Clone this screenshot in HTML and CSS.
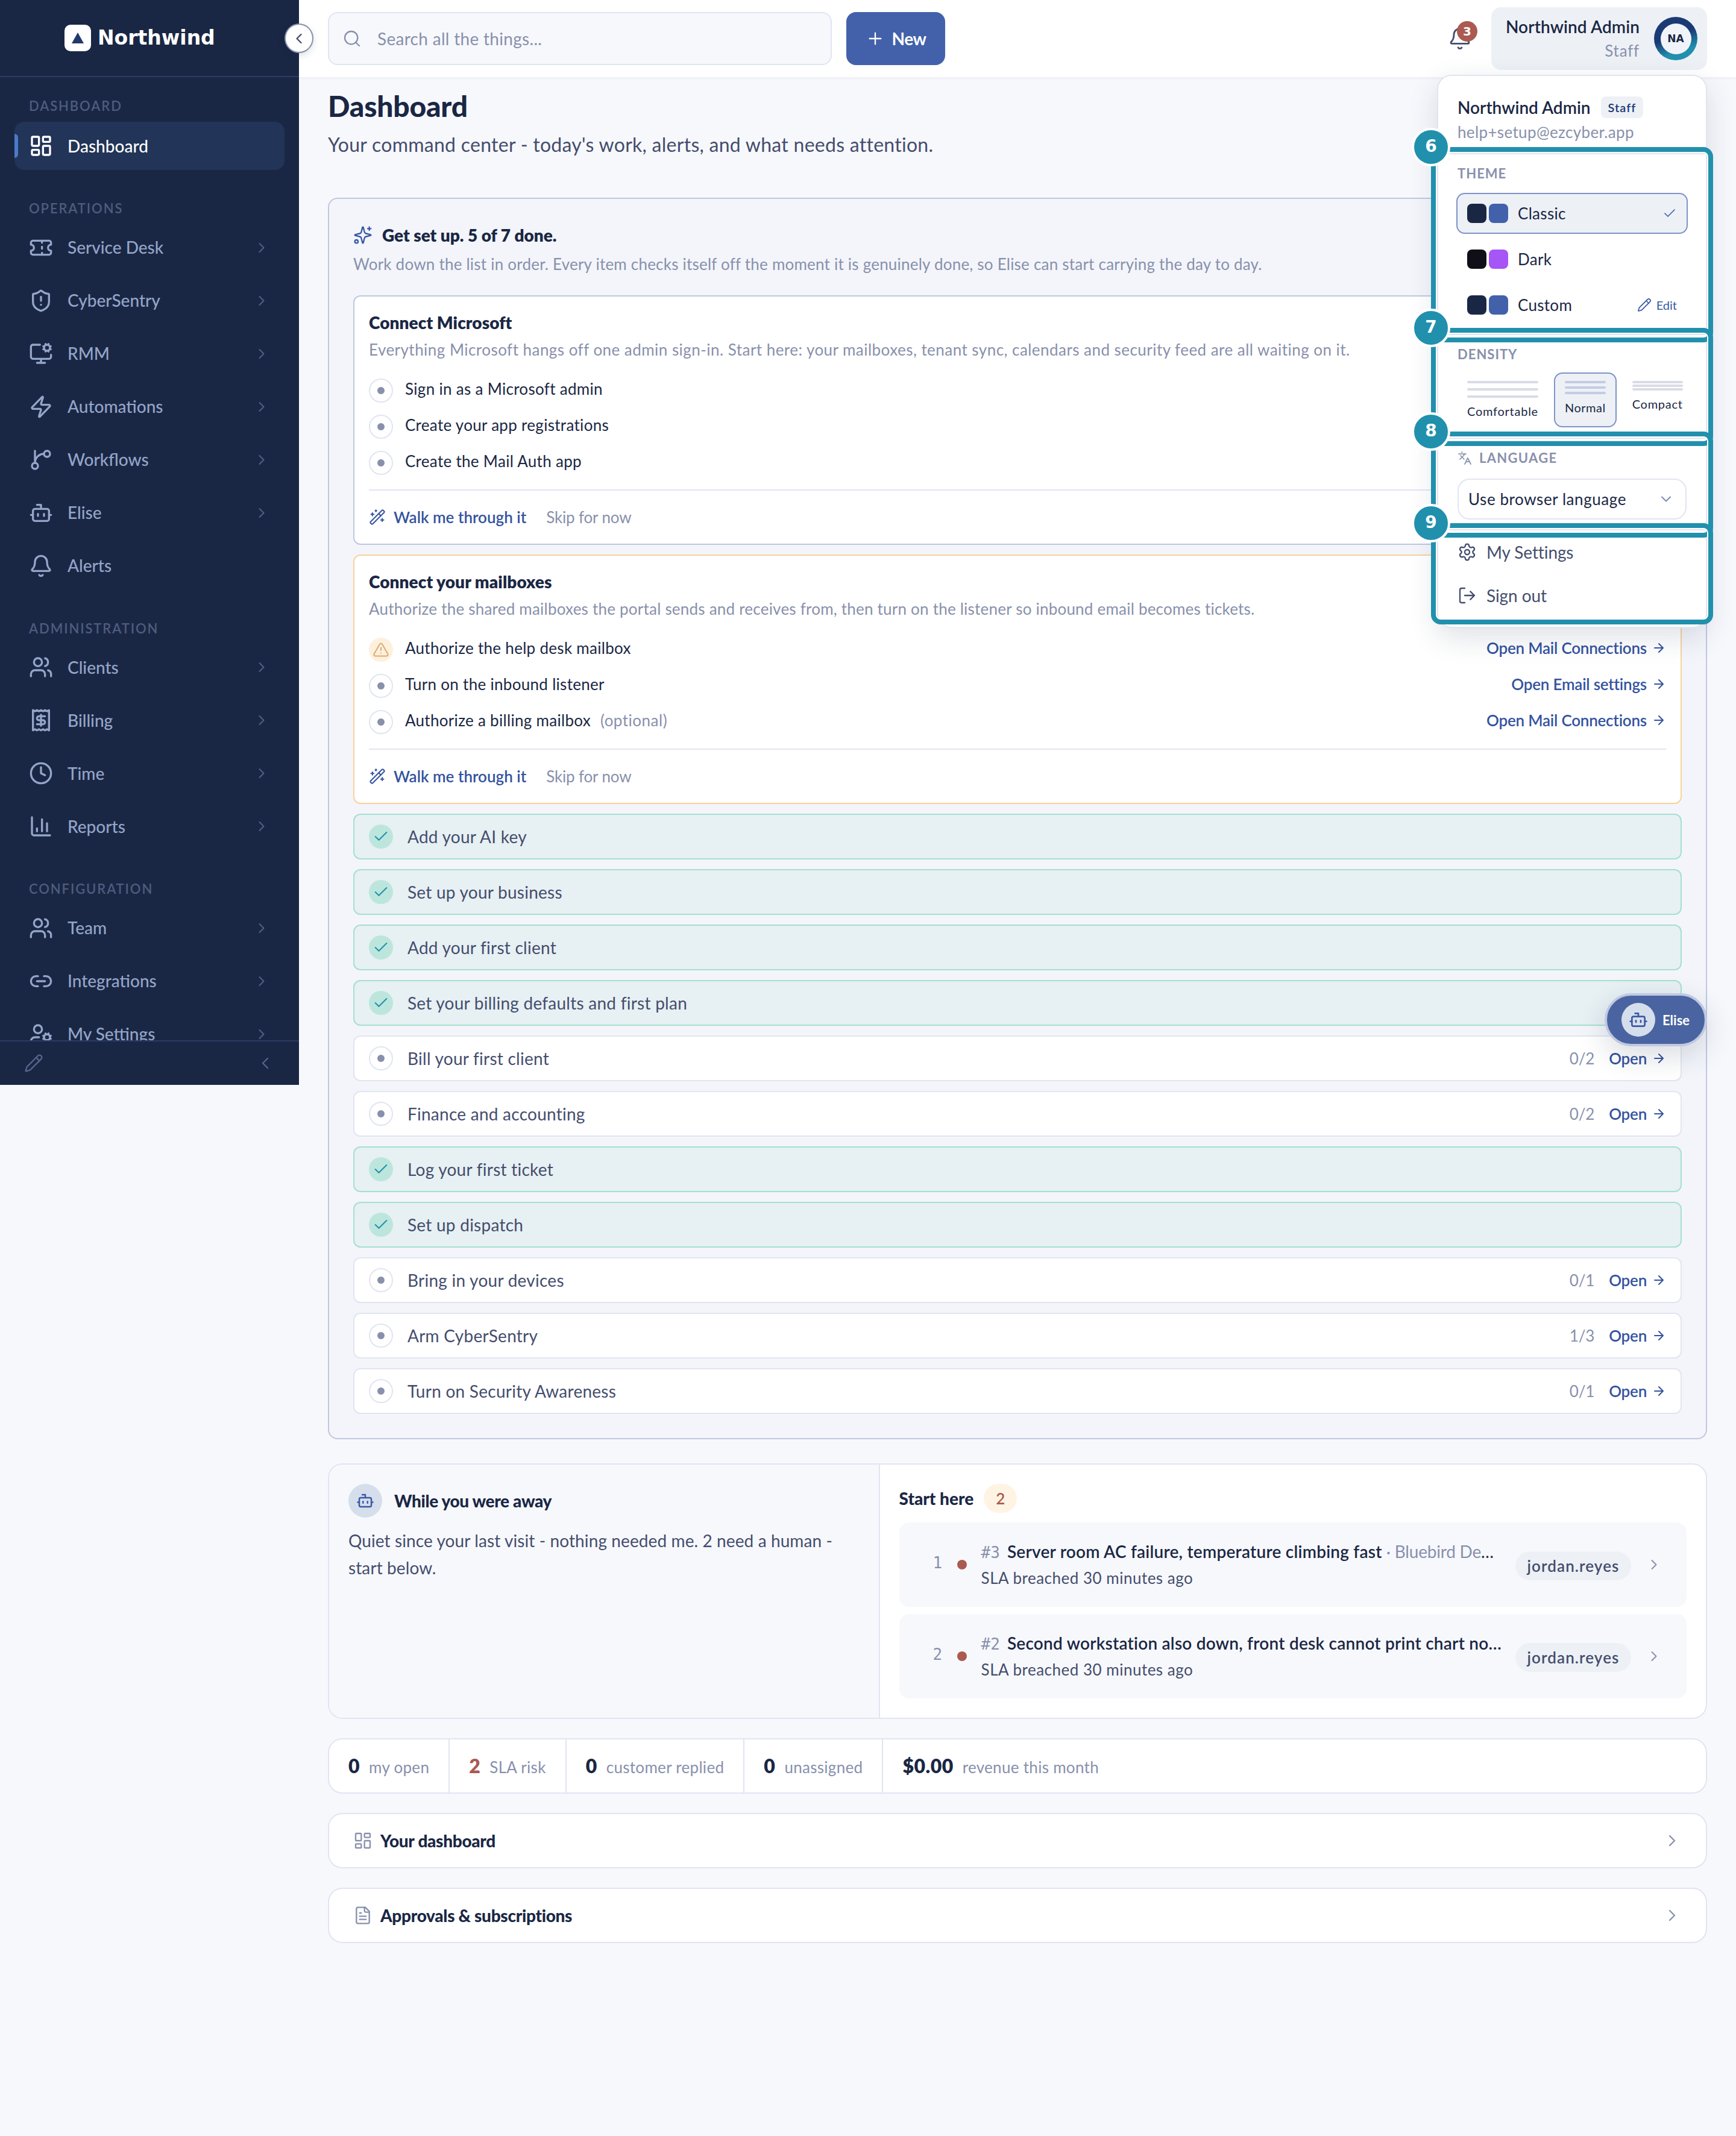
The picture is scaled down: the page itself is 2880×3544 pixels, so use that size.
FILE: index.html
```html
<!DOCTYPE html>
<html lang="en">
<head>
	<meta charset="utf-8">
	<title>Dashboard - Northwind</title>
	<link rel="stylesheet" href="styles.css">
</head>
<body>
	<svg class="sprite">
		<symbol id="i-dash" viewBox="0 0 24 24"><rect x="3" y="3" width="7" height="9" rx="1"/><rect x="14" y="3" width="7" height="5" rx="1"/><rect x="14" y="12" width="7" height="9" rx="1"/><rect x="3" y="16" width="7" height="5" rx="1"/></symbol>
		<symbol id="i-ticket" viewBox="0 0 24 24"><path d="M2 9a3 3 0 0 1 0 6v2a2 2 0 0 0 2 2h16a2 2 0 0 0 2-2v-2a3 3 0 0 1 0-6V7a2 2 0 0 0-2-2H4a2 2 0 0 0-2 2Z"/><path d="M13 5v2M13 17v2M13 11v2"/></symbol>
		<symbol id="i-shield" viewBox="0 0 24 24"><path d="M20 13c0 5-3.5 7.5-7.66 8.95a1 1 0 0 1-.67-.01C7.5 20.5 4 18 4 13V6a1 1 0 0 1 1-1c2 0 4.5-1.2 6.24-2.72a1.17 1.17 0 0 1 1.52 0C14.51 3.81 17 5 19 5a1 1 0 0 1 1 1z"/><path d="M12 8v4M12 16h.01"/></symbol>
		<symbol id="i-monitor" viewBox="0 0 24 24"><path d="M12 17v4M8 21h8M22 13v2a2 2 0 0 1-2 2H4a2 2 0 0 1-2-2V5a2 2 0 0 1 2-2h7"/><path d="m15.2 4.9-.9-.4M15.2 7.1l-.9.4M16.9 3.2l-.4-.9M16.9 8.8l-.4.9M19.5 2.3l-.4.9M19.5 9.7l-.4-.9M21.7 4.5l-.9.4M21.7 7.5l-.9-.4"/><circle cx="18" cy="6" r="3"/></symbol>
		<symbol id="i-zap" viewBox="0 0 24 24"><path d="M4 14a1 1 0 0 1-.78-1.63l9.9-10.2a.5.5 0 0 1 .86.46l-1.92 6.02A1 1 0 0 0 13 10h7a1 1 0 0 1 .78 1.63l-9.9 10.2a.5.5 0 0 1-.86-.46l1.92-6.02A1 1 0 0 0 11 14z"/></symbol>
		<symbol id="i-branch" viewBox="0 0 24 24"><path d="M15 6a9 9 0 0 0-9 9V3"/><circle cx="18" cy="6" r="3"/><circle cx="6" cy="18" r="3"/></symbol>
		<symbol id="i-bot" viewBox="0 0 24 24"><path d="M12 8V4H8"/><rect x="4" y="8" width="16" height="12" rx="2"/><path d="M2 14h2M20 14h2M15 13v2M9 13v2"/></symbol>
		<symbol id="i-bell" viewBox="0 0 24 24"><path d="M10.268 21a2 2 0 0 0 3.464 0"/><path d="M3.262 15.326A1 1 0 0 0 4 17h16a1 1 0 0 0 .74-1.673C19.41 13.956 18 12.499 18 8A6 6 0 0 0 6 8c0 4.499-1.411 5.956-2.738 7.326"/></symbol>
		<symbol id="i-users" viewBox="0 0 24 24"><path d="M16 21v-2a4 4 0 0 0-4-4H6a4 4 0 0 0-4 4v2M16 3.128a4 4 0 0 1 0 7.744M22 21v-2a4 4 0 0 0-3-3.87"/><circle cx="9" cy="7" r="4"/></symbol>
		<symbol id="i-receipt" viewBox="0 0 24 24"><path d="M4 2v20l2-1 2 1 2-1 2 1 2-1 2 1 2-1 2 1V2l-2 1-2-1-2 1-2-1-2 1-2-1-2 1Z"/><path d="M16 8h-6a2 2 0 1 0 0 4h4a2 2 0 1 1 0 4H8M12 17.5v-11"/></symbol>
		<symbol id="i-clock" viewBox="0 0 24 24"><circle cx="12" cy="12" r="10"/><path d="M12 6v6l4 2"/></symbol>
		<symbol id="i-chart" viewBox="0 0 24 24"><path d="M3 3v16a2 2 0 0 0 2 2h16M18 17V9M13 17V5M8 17v-3"/></symbol>
		<symbol id="i-link" viewBox="0 0 24 24"><path d="M9 17H7A5 5 0 0 1 7 7h2M15 7h2a5 5 0 1 1 0 10h-2M8 12h8"/></symbol>
		<symbol id="i-usercog" viewBox="0 0 24 24"><path d="M10 15H6a4 4 0 0 0-4 4v2M14.305 16.53l.923-.382M15.228 13.852l-.923-.383M16.852 12.228l-.383-.923M16.852 17.772l-.383.924M19.148 12.228l.383-.923M19.53 18.696l-.382-.924M20.772 13.852l.924-.383M20.772 16.148l.924.383"/><circle cx="18" cy="15" r="3"/><circle cx="9" cy="7" r="4"/></symbol>
		<symbol id="i-pencil" viewBox="0 0 24 24"><path d="M21.174 6.812a1 1 0 0 0-3.986-3.987L3.842 16.174a2 2 0 0 0-.5.83l-1.321 4.352a.5.5 0 0 0 .623.622l4.353-1.32a2 2 0 0 0 .83-.497z"/><path d="m15 5 4 4"/></symbol>
		<symbol id="i-search" viewBox="0 0 24 24"><circle cx="11" cy="11" r="8"/><path d="m21 21-4.3-4.3"/></symbol>
		<symbol id="i-plus" viewBox="0 0 24 24"><path d="M5 12h14M12 5v14"/></symbol>
		<symbol id="i-right" viewBox="0 0 24 24"><path d="m9 18 6-6-6-6"/></symbol>
		<symbol id="i-left" viewBox="0 0 24 24"><path d="m15 18-6-6 6-6"/></symbol>
		<symbol id="i-down" viewBox="0 0 24 24"><path d="m6 9 6 6 6-6"/></symbol>
		<symbol id="i-check" viewBox="0 0 24 24"><path d="M20 6 9 17l-5-5"/></symbol>
		<symbol id="i-arrow" viewBox="0 0 24 24"><path d="M5 12h14M12 5l7 7-7 7"/></symbol>
		<symbol id="i-sparkles" viewBox="0 0 24 24"><path d="M9.937 15.5A2 2 0 0 0 8.5 14.063l-6.135-1.582a.5.5 0 0 1 0-.962L8.5 9.936A2 2 0 0 0 9.937 8.5l1.582-6.135a.5.5 0 0 1 .963 0L14.063 8.5A2 2 0 0 0 15.5 9.937l6.135 1.581a.5.5 0 0 1 0 .964L15.5 14.063a2 2 0 0 0-1.437 1.437l-1.582 6.135a.5.5 0 0 1-.963 0z"/><path d="M20 2v4M22 4h-4"/><circle cx="4" cy="20" r="2"/></symbol>
		<symbol id="i-wand" viewBox="0 0 24 24"><path d="m21.64 3.64-1.28-1.28a1.21 1.21 0 0 0-1.72 0L2.36 18.64a1.21 1.21 0 0 0 0 1.72l1.28 1.28a1.2 1.2 0 0 0 1.72 0L21.64 5.36a1.2 1.2 0 0 0 0-1.72"/><path d="m14 7 3 3M5 6v4M19 14v4M10 2v2M7 8H3M21 16h-4M11 3H9"/></symbol>
		<symbol id="i-warn" viewBox="0 0 24 24"><path d="m21.73 18-8-14a2 2 0 0 0-3.48 0l-8 14A2 2 0 0 0 4 21h16a2 2 0 0 0 1.73-3M12 9v4M12 17h.01"/></symbol>
		<symbol id="i-lang" viewBox="0 0 24 24"><path d="m5 8 6 6M4 14l6-6 2-3M2 5h12M7 2h1M22 22l-5-10-5 10M14 18h6"/></symbol>
		<symbol id="i-gear" viewBox="0 0 24 24"><path d="M9.671 4.136a2.34 2.34 0 0 1 4.659 0 2.34 2.34 0 0 0 3.319 1.915 2.34 2.34 0 0 1 2.33 4.033 2.34 2.34 0 0 0 0 3.831 2.34 2.34 0 0 1-2.33 4.033 2.34 2.34 0 0 0-3.319 1.915 2.34 2.34 0 0 1-4.659 0 2.34 2.34 0 0 0-3.32-1.915 2.34 2.34 0 0 1-2.33-4.033 2.34 2.34 0 0 0 0-3.831A2.34 2.34 0 0 1 6.35 6.051a2.34 2.34 0 0 0 3.319-1.915"/><circle cx="12" cy="12" r="3"/></symbol>
		<symbol id="i-logout" viewBox="0 0 24 24"><path d="m16 17 5-5-5-5M21 12H9M9 21H5a2 2 0 0 1-2-2V5a2 2 0 0 1 2-2h4"/></symbol>
		<symbol id="i-file" viewBox="0 0 24 24"><path d="M15 2H6a2 2 0 0 0-2 2v16a2 2 0 0 0 2 2h12a2 2 0 0 0 2-2V7Z"/><path d="M14 2v4a2 2 0 0 0 2 2h4M10 9H8M16 13H8M16 17H8"/></symbol>
	</svg>

	<aside class="sidebar">
		<div class="brand">
			<svg class="logo" viewBox="0 0 44 44"><rect width="44" height="44" rx="10" fill="#fff"/><path d="M22 13 32 31H12Z" fill="#22396b"/></svg>
			<span class="brand-name">Northwind</span>
		</div>
		<nav class="nav">
			<h6>Dashboard</h6>
			<a class="active"><svg><use href="#i-dash"/></svg><span>Dashboard</span></a>
			<h6>Operations</h6>
			<a><svg><use href="#i-ticket"/></svg><span>Service Desk</span><svg class="chev"><use href="#i-right"/></svg></a>
			<a><svg><use href="#i-shield"/></svg><span>CyberSentry</span><svg class="chev"><use href="#i-right"/></svg></a>
			<a><svg><use href="#i-monitor"/></svg><span>RMM</span><svg class="chev"><use href="#i-right"/></svg></a>
			<a><svg><use href="#i-zap"/></svg><span>Automations</span><svg class="chev"><use href="#i-right"/></svg></a>
			<a><svg><use href="#i-branch"/></svg><span>Workflows</span><svg class="chev"><use href="#i-right"/></svg></a>
			<a><svg><use href="#i-bot"/></svg><span>Elise</span><svg class="chev"><use href="#i-right"/></svg></a>
			<a><svg><use href="#i-bell"/></svg><span>Alerts</span></a>
			<h6>Administration</h6>
			<a><svg><use href="#i-users"/></svg><span>Clients</span><svg class="chev"><use href="#i-right"/></svg></a>
			<a><svg><use href="#i-receipt"/></svg><span>Billing</span><svg class="chev"><use href="#i-right"/></svg></a>
			<a><svg><use href="#i-clock"/></svg><span>Time</span><svg class="chev"><use href="#i-right"/></svg></a>
			<a><svg><use href="#i-chart"/></svg><span>Reports</span><svg class="chev"><use href="#i-right"/></svg></a>
			<h6>Configuration</h6>
			<a><svg><use href="#i-users"/></svg><span>Team</span><svg class="chev"><use href="#i-right"/></svg></a>
			<a><svg><use href="#i-link"/></svg><span>Integrations</span><svg class="chev"><use href="#i-right"/></svg></a>
			<a><svg><use href="#i-usercog"/></svg><span>My Settings</span><svg class="chev"><use href="#i-right"/></svg></a>
		</nav>
		<div class="side-foot">
			<svg><use href="#i-pencil"/></svg>
			<svg><use href="#i-left"/></svg>
		</div>
		<button class="collapse"><svg><use href="#i-left"/></svg></button>
	</aside>

	<div class="page">
		<header class="topbar">
			<div class="search"><svg><use href="#i-search"/></svg><span>Search all the things...</span></div>
			<button class="btn-new"><svg><use href="#i-plus"/></svg><span>New</span></button>
			<div class="bell"><svg><use href="#i-bell"/></svg><b>3</b></div>
			<div class="user">
				<div class="user-text"><span class="user-name">Northwind Admin</span><small>Staff</small></div>
				<div class="avatar"><i>NA</i></div>
			</div>
		</header>

		<main class="content">
			<h1>Dashboard</h1>
			<p class="lead">Your command center - today's work, alerts, and what needs attention.</p>

			<section class="setup">
				<h2><svg><use href="#i-sparkles"/></svg><span>Get set up. 5 of 7 done.</span></h2>
				<p class="note">Work down the list in order. Every item checks itself off the moment it is genuinely done, so Elise can start carrying the day to day.</p>

				<div class="task">
					<h3>Connect Microsoft</h3>
					<p class="note wide">Everything Microsoft hangs off one admin sign-in. Start here: your mailboxes, tenant sync, calendars and security feed are all waiting on it.</p>
					<ul class="steps">
						<li><i class="dot"></i><span>Sign in as a Microsoft admin</span></li>
						<li><i class="dot"></i><span>Create your app registrations</span></li>
						<li><i class="dot"></i><span>Create the Mail Auth app</span></li>
					</ul>
					<div class="task-foot"><a class="walk"><svg><use href="#i-wand"/></svg><span>Walk me through it</span></a><span class="skip">Skip for now</span></div>
				</div>

				<div class="task warn">
					<h3>Connect your mailboxes</h3>
					<p class="note">Authorize the shared mailboxes the portal sends and receives from, then turn on the listener so inbound email becomes tickets.</p>
					<ul class="steps">
						<li><i class="dot alert"><svg><use href="#i-warn"/></svg></i><span>Authorize the help desk mailbox</span><a class="open"><span>Open Mail Connections</span><svg><use href="#i-arrow"/></svg></a></li>
						<li><i class="dot"></i><span>Turn on the inbound listener</span><a class="open"><span>Open Email settings</span><svg><use href="#i-arrow"/></svg></a></li>
						<li><i class="dot"></i><span>Authorize a billing mailbox</span><em>(optional)</em><a class="open"><span>Open Mail Connections</span><svg><use href="#i-arrow"/></svg></a></li>
					</ul>
					<div class="task-foot"><a class="walk"><svg><use href="#i-wand"/></svg><span>Walk me through it</span></a><span class="skip">Skip for now</span></div>
				</div>

				<div class="row done"><i class="dot"><svg><use href="#i-check"/></svg></i><span>Add your AI key</span></div>
				<div class="row done"><i class="dot"><svg><use href="#i-check"/></svg></i><span>Set up your business</span></div>
				<div class="row done"><i class="dot"><svg><use href="#i-check"/></svg></i><span>Add your first client</span></div>
				<div class="row done"><i class="dot"><svg><use href="#i-check"/></svg></i><span>Set your billing defaults and first plan</span></div>
				<div class="row"><i class="dot"></i><span>Bill your first client</span><em>0/2</em><a class="open"><span>Open</span><svg><use href="#i-arrow"/></svg></a></div>
				<div class="row"><i class="dot"></i><span>Finance and accounting</span><em>0/2</em><a class="open"><span>Open</span><svg><use href="#i-arrow"/></svg></a></div>
				<div class="row done"><i class="dot"><svg><use href="#i-check"/></svg></i><span>Log your first ticket</span></div>
				<div class="row done"><i class="dot"><svg><use href="#i-check"/></svg></i><span>Set up dispatch</span></div>
				<div class="row"><i class="dot"></i><span>Bring in your devices</span><em>0/1</em><a class="open"><span>Open</span><svg><use href="#i-arrow"/></svg></a></div>
				<div class="row"><i class="dot"></i><span>Arm CyberSentry</span><em>1/3</em><a class="open"><span>Open</span><svg><use href="#i-arrow"/></svg></a></div>
				<div class="row"><i class="dot"></i><span>Turn on Security Awareness</span><em>0/1</em><a class="open"><span>Open</span><svg><use href="#i-arrow"/></svg></a></div>
			</section>

			<section class="brief">
				<div class="away">
					<h4><i class="bot"><svg><use href="#i-bot"/></svg></i><span>While you were away</span></h4>
					<p>Quiet since your last visit - nothing needed me. 2 need a human -<br>start below.</p>
				</div>
				<div class="start">
					<h4><span>Start here</span><b>2</b></h4>
					<div class="ticket">
						<span class="num">1</span><i class="red"></i>
						<div class="ticket-text">
							<p class="t"><span class="id">#3</span><strong>Server room AC failure, temperature climbing fast</strong><span class="org"> · Bluebird De</span>…</p>
							<p class="s">SLA breached 30 minutes ago</p>
						</div>
						<span class="pill">jordan.reyes</span><svg><use href="#i-right"/></svg>
					</div>
					<div class="ticket">
						<span class="num">2</span><i class="red"></i>
						<div class="ticket-text">
							<p class="t"><span class="id">#2</span><strong>Second workstation also down, front desk cannot print chart no…</strong></p>
							<p class="s">SLA breached 30 minutes ago</p>
						</div>
						<span class="pill">jordan.reyes</span><svg><use href="#i-right"/></svg>
					</div>
				</div>
			</section>

			<section class="stats">
				<div><b>0</b><span>my open</span></div>
				<div><b class="bad">2</b><span>SLA risk</span></div>
				<div><b>0</b><span>customer replied</span></div>
				<div><b>0</b><span>unassigned</span></div>
				<div><b>$0.00</b><span>revenue this month</span></div>
			</section>

			<section class="panel"><svg><use href="#i-dash"/></svg><span>Your dashboard</span><svg class="chev"><use href="#i-right"/></svg></section>
			<section class="panel"><svg><use href="#i-file"/></svg><span>Approvals &amp; subscriptions</span><svg class="chev"><use href="#i-right"/></svg></section>
		</main>
	</div>

	<button class="elise"><i class="bot"><svg><use href="#i-bot"/></svg></i><span>Elise</span></button>

	<div class="menu">
		<div class="menu-head">
			<p class="who"><span>Northwind Admin</span><b>Staff</b></p>
			<p class="mail">help+setup@ezcyber.app</p>
		</div>
		<div class="menu-sec theme">
			<h5>Theme</h5>
			<div class="opt on"><i class="sw navy"></i><i class="sw blue"></i><span>Classic</span><svg><use href="#i-check"/></svg></div>
			<div class="opt"><i class="sw black"></i><i class="sw purple"></i><span>Dark</span></div>
			<div class="opt"><i class="sw navy"></i><i class="sw blue"></i><span>Custom</span><a class="edit"><svg><use href="#i-pencil"/></svg><span>Edit</span></a></div>
		</div>
		<div class="menu-sec density">
			<h5>Density</h5>
			<div class="dens">
				<div class="comfy"><i></i><i></i><i></i><span>Comfortable</span></div>
				<div class="normal on"><i></i><i></i><i></i><span>Normal</span></div>
				<div class="compact"><i></i><i></i><i></i><span>Compact</span></div>
			</div>
		</div>
		<div class="menu-sec lang">
			<h5><svg><use href="#i-lang"/></svg><span>Language</span></h5>
			<div class="select"><span>Use browser language</span><svg><use href="#i-down"/></svg></div>
		</div>
		<div class="menu-sec links">
			<a><svg><use href="#i-gear"/></svg><span>My Settings</span></a>
			<a><svg><use href="#i-logout"/></svg><span>Sign out</span></a>
		</div>
	</div>

	<!-- numbered callouts over the menu -->
	<div class="mark m6"><b>6</b></div>
	<div class="mark m7"><b>7</b></div>
	<div class="mark m8"><b>8</b></div>
	<div class="mark m9"><b>9</b></div>
</body>
</html>
```
FILE: styles.css
```css
*{margin:0;padding:0;box-sizing:border-box;}
body{
	display: flex;
	position: relative;
	width: 2880px;
	height: 3544px;
	background-color: #f7f8fc;
	font-family: Lato, "Noto Sans", sans-serif;
	font-size: 28px;
	color: #1a2744;
}
svg{
	flex: none;
	fill: none;
	stroke: currentColor;
	stroke-width: 1.75;
	stroke-linecap: round;
	stroke-linejoin: round;
}
i,em{font-style: normal;}
button{border: 0;font: inherit;}
.sprite{position: absolute;width: 0;height: 0;}

/* sidebar */
.sidebar{
	position: relative;
	display: flex;
	flex-direction: column;
	flex: none;
	width: 496px;
	height: 1800px;
	background-color: #1a2744;
	color: #94a5c9;
}
.brand{
	display: flex;
	align-items: center;
	gap: 11px;
	height: 128px;
	padding-left: 107px;
	border-bottom: 2px solid #2b3c62;
}
.logo{width: 44px;height: 44px;stroke: none;}
.brand-name{
	font: bold 33px/44px "DejaVu Sans", sans-serif;
	color: #fff;
}
.nav{
	flex: 1;
	overflow: hidden;
	padding: 0 24px;
}
.nav h6{
	height: 88.5px;
	padding: 50px 24px 0;
	margin-top: -8px;
	font-size: 22px;
	line-height: 28px;
	font-weight: 600;
	letter-spacing: 1.9px;
	text-transform: uppercase;
	color: #4f5c7e;
}
.nav h6:first-child{
	height: 74px;
	padding-top: 34px;
	margin-top: 0;
}
.nav a{
	position: relative;
	display: flex;
	align-items: center;
	height: 80px;
	margin-bottom: 8px;
	padding: 0 24px;
	border-radius: 16px;
	font-weight: 500;
	line-height: 34px;
}
.nav a span{padding-bottom: 1px;}
.nav a svg{width: 40px;height: 40px;margin-right: 24px;stroke-width: 2;}
.nav a .chev{
	width: 28px;
	height: 28px;
	margin: 0 0 0 auto;
	stroke-width: 1.75;
	color: #4f6087;
}
.nav .active{background-color: #223457;color: #fff;}
.nav .active:before{
	content: "";
	position: absolute;
	left: 0;
	top: 20px;
	width: 6px;
	height: 40px;
	border-radius: 0 6px 6px 0;
	background-color: #4a7bc8;
}
.side-foot{
	display: flex;
	justify-content: space-between;
	align-items: center;
	height: 74px;
	padding: 0 40px;
	border-top: 2px solid #2b3c62;
	color: #56658b;
}
.side-foot svg{width: 32px;height: 32px;}
.collapse{
	position: absolute;
	left: 472px;
	top: 39px;
	display: flex;
	align-items: center;
	justify-content: center;
	width: 48px;
	height: 49px;
	border: 2px solid #8890ac;
	border-radius: 50%;
	background-color: #fff;
	color: #444d6d;
	box-shadow: 0 4px 12px rgba(26,39,68,.15);
}
.collapse svg{width: 28px;height: 28px;stroke-width: 2;}

/* topbar */
.page{flex: 1;}
.topbar{
	display: flex;
	align-items: center;
	height: 128px;
	padding: 0 48px;
	background-color: #fff;
	box-shadow: 0 2px 4px rgba(26,39,68,.05);
}
.search{
	display: flex;
	align-items: center;
	gap: 26px;
	width: 836px;
	height: 88px;
	padding: 0 22px;
	border: 2px solid #e1e5f1;
	border-radius: 16px;
	background-color: #f7f8fc;
	color: #8890ac;
	letter-spacing: .3px;
}
.search svg{width: 32px;height: 32px;}
.btn-new{
	display: flex;
	align-items: center;
	justify-content: center;
	gap: 12px;
	width: 164px;
	height: 88px;
	margin-left: 24px;
	border-radius: 16px;
	background-color: #4361ab;
	color: #fff;
	font-weight: 700;
	letter-spacing: -.5px;
}
.btn-new svg{width: 32px;height: 32px;}
.bell{
	position: relative;
	height: 40px;
	margin-left: auto;
	margin-right: 32px;
	color: #444d6d;
}
.bell svg{width: 40px;height: 40px;}
.bell b{
	position: absolute;
	left: 15px;
	top: -9px;
	width: 34px;
	height: 34px;
	border-radius: 50%;
	background-color: #aa5a50;
	color: #fff;
	font: bold 20px/34px "DejaVu Sans", sans-serif;
	text-align: center;
}
.user{
	display: flex;
	justify-content: flex-end;
	align-items: center;
	gap: 24px;
	width: 358px;
	height: 104px;
	padding-right: 16px;
	border-radius: 16px;
	background-color: #edf1f6;
}
.user-text{display: flex;flex-direction: column;text-align: right;line-height: 40px;white-space: nowrap;}
.user-name{font-weight: 600;letter-spacing: .1px;}
.user small{font-size: 26px;letter-spacing: .8px;color: #8890ac;}
.avatar{
	display: flex;
	align-items: center;
	justify-content: center;
	width: 72px;
	height: 72px;
	border-radius: 50%;
	background: linear-gradient(160deg, #1b3a75 45%, #2190ad 75%);
}
.avatar i{
	width: 51px;
	height: 51px;
	border-radius: 50%;
	background-color: #f0f4fa;
	font: bold 17px/51px "DejaVu Sans", sans-serif;
	text-align: center;
}

/* content */
.content{padding: 18px 48px 0;}
h1{
	font-size: 48px;
	line-height: 60px;
	font-weight: 900;
	letter-spacing: -.2px;
}
.lead{
	margin: 12px 0 66px;
	font-size: 32px;
	line-height: 44px;
	letter-spacing: .27px;
	color: #444d6d;
}
.setup{
	padding: 40px;
	border: 2px solid #bfc8e0;
	border-radius: 16px;
	background-color: #f3f5fa;
}
.setup h2{
	display: flex;
	align-items: center;
	gap: 16px;
	font-size: 28px;
	line-height: 40px;
	font-weight: 800;
}
.setup h2 svg{width: 32px;height: 32px;color: #3b59a5;}
.note{
	font-size: 26px;
	line-height: 36px;
	letter-spacing: .22px;
	color: #8890ac;
	white-space: nowrap;
}
.note.wide{letter-spacing: .46px;}
.setup > .note{margin: 10px 0 34px;}
.task{
	height: 414px;
	padding: 24px;
	margin-bottom: 16px;
	border: 2px solid #bfc8e0;
	border-radius: 12px;
	background-color: #fff;
}
.task.warn{border-color: #f8d29a;}
.task h3{font-size: 28px;line-height: 38px;font-weight: 800;letter-spacing: .08px;}
.task .note{margin: 8px 0 30px;}
.steps{
	display: flex;
	flex-direction: column;
	gap: 20px;
	list-style: none;
	font-size: 26px;
	line-height: 34px;
	letter-spacing: .3px;
}
.steps li{display: flex;height: 40px;}
.steps .dot{margin-right: 20px;}
.steps em{margin-left: 16px;letter-spacing: .5px;color: #8890ac;}
.dot{
	display: flex;
	align-items: center;
	justify-content: center;
	flex: none;
	width: 40px;
	height: 40px;
	border: 2px solid #e1e5f1;
	border-radius: 50%;
	background-color: #fff;
}
.dot:before{
	content: "";
	width: 12px;
	height: 12px;
	border-radius: 50%;
	background-color: #8890ac;
}
.dot.alert,.done .dot{border: 0;background-color: #fdf0dd;color: #dfaa70;}
.dot.alert:before,.done .dot:before{display: none;}
.dot svg{width: 28px;height: 28px;}
.open{
	display: flex;
	align-items: center;
	gap: 8px;
	margin-left: auto;
	font-size: 26px;
	font-weight: 600;
	letter-spacing: -.22px;
	color: #34539f;
}
.steps .open{height: 34px;}
.open svg{width: 24px;height: 24px;stroke-width: 2;}
.task-foot{
	display: flex;
	align-items: center;
	margin-top: 24px;
	padding-top: 26px;
	border-top: 2px solid #e1e5f1;
	font-size: 26px;
	line-height: 36px;
}
.walk{
	display: flex;
	align-items: center;
	gap: 13px;
	font-weight: 600;
	color: #34539f;
}
.walk svg{width: 28px;height: 28px;}
.skip{margin-left: 33px;letter-spacing: -.15px;color: #8890ac;}
.row{
	display: flex;
	align-items: center;
	height: 76px;
	margin-bottom: 16px;
	padding: 0 24px;
	border: 2px solid #e1e5f1;
	border-radius: 12px;
	background-color: #fff;
	color: #444d6d;
	letter-spacing: .25px;
}
.row:last-child{margin-bottom: 0;}
.row .dot{margin-right: 24px;}
.row em{margin-left: auto;margin-right: 24px;font-size: 26px;letter-spacing: -.2px;color: #8890ac;}
.row .open{margin-left: 0;}
.row.done{border-color: #a5e0cf;background-color: #e7f0f3;}
.done .dot{background-color: #bce6dc;color: #2190ad;}

/* briefing */
.brief{
	display: grid;
	grid-template-columns: 2fr 3fr;
	height: 424px;
	margin: 40px 0 32px;
	border: 2px solid #e1e5f1;
	border-radius: 24px;
	background-color: #fff;
	overflow: hidden;
}
.brief h4{display: flex;align-items: center;font-size: 28px;font-weight: 900;}
.away{
	padding: 32px;
	border-right: 2px solid #e1e5f1;
	background-color: #f7f8fc;
}
.away h4{letter-spacing: -.36px;}
.bot{
	display: flex;
	align-items: center;
	justify-content: center;
	width: 56px;
	height: 56px;
	border-radius: 50%;
	background-color: #d5deeb;
	color: #3b59a5;
}
.bot svg{width: 32px;height: 32px;stroke-width: 2;}
.away .bot{margin-right: 20px;}
.away .bot svg{width: 30px;height: 30px;}
.away p{
	margin-top: 16px;
	font-size: 28px;
	line-height: 45px;
	letter-spacing: .1px;
	color: #444d6d;
	white-space: nowrap;
}
.start{min-width: 0;padding: 32px;}
.start h4{margin-bottom: 16px;}
.start h4 b{
	width: 55px;
	height: 48px;
	margin-left: 17px;
	border-radius: 24px;
	background-color: #fff4e4;
	color: #aa5a50;
	font-size: 26px;
	line-height: 48px;
	font-weight: 600;
	text-align: center;
}
.ticket{
	display: flex;
	align-items: center;
	height: 140px;
	margin-bottom: 12px;
	padding: 0 40px 0 56px;
	border-radius: 16px;
	background-color: #f7f8fc;
}
.ticket .num,.ticket .id{
	font-family: "DejaVu Sans Mono", monospace;
	font-size: 26px;
	color: #8890ac;
}
.ticket .num{width: 16px;margin-top: -6px;}
.red{width: 16px;height: 16px;margin: 0 24px;border-radius: 50%;background-color: #aa5a50;flex: none;}
.ticket-text{flex: 1;min-width: 0;}
.ticket .t{height: 44px;line-height: 44px;white-space: nowrap;}
.ticket .t strong{font-weight: 600;margin-left: 12px;letter-spacing: .23px;}
.ticket .org{letter-spacing: -.2px;color: #8890ac;}
.ticket .s{font-size: 26px;line-height: 44px;letter-spacing: .5px;color: #444d6d;}
.pill{
	width: 192px;
	height: 48px;
	margin: 4px 24px 0 28px;
	border-radius: 24px;
	background-color: #edf1f6;
	color: #444d6d;
	font-size: 26px;
	line-height: 48px;
	font-weight: 600;
	letter-spacing: 1.1px;
	text-align: center;
}
.ticket svg{width: 28px;height: 28px;color: #8890ac;}

.stats{
	display: flex;
	height: 92px;
	margin-bottom: 32px;
	border: 2px solid #e1e5f1;
	border-radius: 24px;
	background-color: #fff;
}
.stats div{
	display: flex;
	align-items: baseline;
	padding: 22px 32px 0;
	border-right: 2px solid #e1e5f1;
}
.stats div:last-child{border: 0;}
.stats b{font-size: 32px;line-height: 44px;font-weight: 800;letter-spacing: .5px;margin-right: 15px;}
.stats b.bad{color: #aa5a50;}
.stats span{font-size: 26px;letter-spacing: .3px;color: #8890ac;}
.panel{
	display: flex;
	align-items: center;
	height: 92px;
	margin-bottom: 32px;
	padding: 0 40px;
	border: 2px solid #e1e5f1;
	border-radius: 24px;
	background-color: #fff;
	font-weight: 900;
	letter-spacing: -.3px;
}
.panel svg{width: 32px;height: 32px;margin-right: 13px;color: #8890ac;}
.panel .chev{margin: 0 0 0 auto;}

/* floating assistant */
.elise{
	position: absolute;
	left: 2662px;
	top: 1648px;
	display: flex;
	align-items: center;
	gap: 12px;
	width: 170px;
	height: 88px;
	padding: 0 24px;
	border: 4px solid #c0c8e2;
	border-radius: 44px;
	background-color: #4a64a1;
	box-shadow: 0 16px 48px rgba(26,39,68,.16);
	color: #fff;
	font-size: 22px;
	font-weight: 700;
}

/* user menu */
.menu{
	position: absolute;
	left: 2384px;
	top: 124px;
	width: 448px;
	height: 918px;
	border: 2px solid #e1e5f1;
	border-radius: 24px;
	background-color: #fff;
	box-shadow: 0 16px 48px rgba(26,39,68,.14);
}
.menu-head{height: 128px;padding: 32px 32px 0;}
.who{display: flex;align-items: center;line-height: 40px;font-weight: 600;}
.who b{
	height: 36px;
	margin-left: 17px;
	padding: 0 12px;
	border-radius: 8px;
	background-color: #edf1f6;
	color: #1b3a75;
	font-size: 20px;
	line-height: 36px;
	font-weight: 600;
	letter-spacing: 1px;
}
.mail{font-size: 26px;line-height: 42px;letter-spacing: .36px;color: #8890ac;}
.menu-sec{padding: 20px 30px 0;border-top: 2px solid #e1e5f1;}
.menu h5{
	display: flex;
	align-items: center;
	padding-left: 2px;
	font-size: 22px;
	line-height: 24px;
	font-weight: 700;
	letter-spacing: 1px;
	text-transform: uppercase;
	color: #8890ac;
}
.theme{height: 300px;}
.theme h5,.density h5{line-height: 24px;margin-bottom: 20px;}
.opt{
	display: flex;
	align-items: center;
	height: 68px;
	margin-bottom: 8px;
	padding: 0 16px;
	border: 2px solid transparent;
	border-radius: 14px;
	font-size: 26px;
}
.opt.on,.dens .on{border-color: #7e93c8;background-color: #edf1f6;}
.opt > svg{width: 24px;height: 24px;margin-left: auto;color: #4361ab;}
.opt > span{margin-left: 12px;letter-spacing: .3px;}
.sw{width: 32px;height: 32px;margin-right: 4px;border-radius: 8px;}
.navy{background-color: #1a2744;}
.blue{background-color: #4361ab;}
.black{background-color: #100f18;}
.purple{background-color: #a655f7;}
.edit{display: flex;align-items: center;gap: 8px;margin-left: auto;font-size: 20px;color: #3b59a5;}
.edit svg{width: 24px;height: 24px;}
.density{height: 172px;}
.density h5{margin-bottom: 18px;}
.dens{
	display: flex;
	align-items: flex-start;
	gap: 8px;
	font-size: 20px;
	line-height: 26px;
	letter-spacing: .75px;
}
.dens div{
	display: flex;
	flex-direction: column;
	padding: 12px 16px 18px;
	border: 2px solid transparent;
	border-radius: 14px;
}
.dens i{height: 4px;border-radius: 2px;background-color: #d9dce6;}
.dens .on i{background-color: #c3cce2;}
.comfy i + i{margin-top: 8px;}
.normal i + i{margin-top: 5px;}
.compact i + i{margin-top: 2px;}
.dens span{margin-top: 9px;}
.dens .normal{letter-spacing: .5px;}
.lang{height: 152px;}
.lang h5 svg{width: 24px;height: 24px;margin-right: 12px;}
.lang h5{margin-bottom: 22px;letter-spacing: 1.3px;}
.select{
	display: flex;
	align-items: center;
	justify-content: space-between;
	width: 380px;
	height: 68px;
	margin-left: 2px;
	padding: 0 18px 0 16px;
	border: 2px solid #e1e5f1;
	border-radius: 20px;
	font-size: 26px;
	letter-spacing: .57px;
}
.select svg{width: 28px;height: 28px;color: #7a8cb8;}
.menu .links{padding-top: 0;}
.links a{
	display: flex;
	align-items: center;
	gap: 16px;
	height: 72px;
	padding-left: 2px;
	letter-spacing: -.1px;
	color: #444d6d;
}
.links svg{width: 32px;height: 32px;}

.mark{
	position: absolute;
	left: 2374px;
	width: 468px;
	border: 8px solid #2190ad;
	border-radius: 16px;
	box-shadow: inset 0 0 0 2px #fff;
}
.mark b{
	position: absolute;
	left: -40px;
	top: -40px;
	width: 64px;
	height: 64px;
	border: 4px solid #fff;
	border-radius: 50%;
	background-color: #2190ad;
	color: #fff;
	font: bold 28px/54px "DejaVu Sans", sans-serif;
	text-align: center;
}
.m6{top: 244px;height: 324px;}
.m7{top: 544px;height: 196px;}
.m8{top: 716px;height: 176px;}
.m9{top: 868px;height: 168px;}
```
